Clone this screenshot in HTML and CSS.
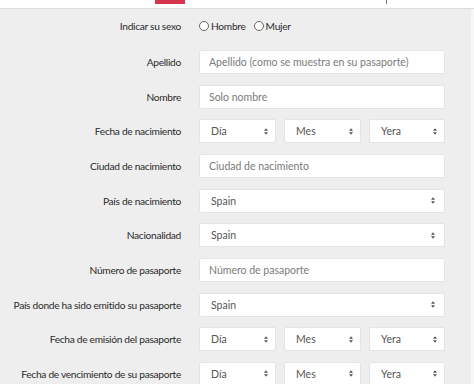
FILE: index.html
```html
<!DOCTYPE html>
<html lang="es">
  <head>
    <meta charset="UTF-8" />
    <meta name="viewport" content="width=device-width, initial-scale=1.0" />
    <title>Formulario de pasaporte</title>
    <link rel="stylesheet" href="styles.css">
  </head>
  <body>
    <div class="topbar">
      <span class="topbar-accent"></span>
      <span class="topbar-sep"></span>
    </div>
    <div class="page">
      <form class="passport-form">
        <div class="row row-first">
          <label>Indicar su sexo</label>
          <div class="radios">
            <label class="radio"><input type="radio" name="sexo" /> Hombre</label>
            <label class="radio"><input type="radio" name="sexo" /> Mujer</label>
          </div>
        </div>

        <div class="row">
          <label for="apellido">Apellido</label>
          <input class="field" id="apellido" type="text" placeholder="Apellido (como se muestra en su pasaporte)" />
        </div>

        <div class="row">
          <label for="nombre">Nombre</label>
          <input class="field" id="nombre" type="text" placeholder="Solo nombre" />
        </div>

        <div class="row">
          <label>Fecha de nacimiento</label>
          <div class="date-group">
            <div class="select-wrap"><select class="field"><option>Día</option></select><svg class="caret" viewBox="0 0 5 8"><path d="M2.5 0 5 3H0z M0 5h5L2.5 8z"/></svg></div>
            <div class="select-wrap"><select class="field"><option>Mes</option></select><svg class="caret" viewBox="0 0 5 8"><path d="M2.5 0 5 3H0z M0 5h5L2.5 8z"/></svg></div>
            <div class="select-wrap"><select class="field"><option>Yera</option></select><svg class="caret" viewBox="0 0 5 8"><path d="M2.5 0 5 3H0z M0 5h5L2.5 8z"/></svg></div>
          </div>
        </div>

        <div class="row">
          <label for="ciudad">Ciudad de nacimiento</label>
          <input class="field" id="ciudad" type="text" placeholder="Ciudad de nacimiento" />
        </div>

        <div class="row">
          <label>País de nacimiento</label>
          <div class="select-wrap wide"><select class="field"><option>Spain</option></select><svg class="caret" viewBox="0 0 5 8"><path d="M2.5 0 5 3H0z M0 5h5L2.5 8z"/></svg></div>
        </div>

        <div class="row">
          <label>Nacionalidad</label>
          <div class="select-wrap wide"><select class="field"><option>Spain</option></select><svg class="caret" viewBox="0 0 5 8"><path d="M2.5 0 5 3H0z M0 5h5L2.5 8z"/></svg></div>
        </div>

        <div class="row">
          <label for="pasaporte">Número de pasaporte</label>
          <input class="field" id="pasaporte" type="text" placeholder="Número de pasaporte" />
        </div>

        <div class="row">
          <label>País donde ha sido emitido su pasaporte</label>
          <div class="select-wrap wide"><select class="field"><option>Spain</option></select><svg class="caret" viewBox="0 0 5 8"><path d="M2.5 0 5 3H0z M0 5h5L2.5 8z"/></svg></div>
        </div>

        <div class="row">
          <label>Fecha de emisión del pasaporte</label>
          <div class="date-group">
            <div class="select-wrap"><select class="field"><option>Día</option></select><svg class="caret" viewBox="0 0 5 8"><path d="M2.5 0 5 3H0z M0 5h5L2.5 8z"/></svg></div>
            <div class="select-wrap"><select class="field"><option>Mes</option></select><svg class="caret" viewBox="0 0 5 8"><path d="M2.5 0 5 3H0z M0 5h5L2.5 8z"/></svg></div>
            <div class="select-wrap"><select class="field"><option>Yera</option></select><svg class="caret" viewBox="0 0 5 8"><path d="M2.5 0 5 3H0z M0 5h5L2.5 8z"/></svg></div>
          </div>
        </div>

        <div class="row">
          <label>Fecha de vencimiento de su pasaporte</label>
          <div class="date-group">
            <div class="select-wrap"><select class="field"><option>Día</option></select><svg class="caret" viewBox="0 0 5 8"><path d="M2.5 0 5 3H0z M0 5h5L2.5 8z"/></svg></div>
            <div class="select-wrap"><select class="field"><option>Mes</option></select><svg class="caret" viewBox="0 0 5 8"><path d="M2.5 0 5 3H0z M0 5h5L2.5 8z"/></svg></div>
            <div class="select-wrap"><select class="field"><option>Yera</option></select><svg class="caret" viewBox="0 0 5 8"><path d="M2.5 0 5 3H0z M0 5h5L2.5 8z"/></svg></div>
          </div>
        </div>
      </form>
    </div>
  </body>
</html>
```

FILE: styles.css
```css
* {
  box-sizing: border-box;
}

body {
  margin: 0;
  font-family: Lato, "Open Sans", sans-serif;
  font-size: 10.5px;
  color: #333;
  background: #fff;
  overflow: hidden;
}

.topbar {
  height: 9px;
  background: #fff;
  border-bottom: 1px solid #dcdcdc;
  position: relative;
}

.topbar-accent {
  position: absolute;
  left: 155px;
  top: 0;
  width: 30px;
  height: 4px;
  background: #d7354d;
}

.topbar-sep {
  position: absolute;
  left: 386px;
  top: 0;
  width: 1px;
  height: 4px;
  background: #777;
}

.page {
  background: #eeeeee;
  border-right: 3px solid #f7f7f7;
  min-height: 400px;
  padding-top: 5px;
}

.passport-form {
  display: flex;
  flex-direction: column;
  gap: 10.67px;
}

.row {
  display: grid;
  grid-template-columns: 181px 246px;
  column-gap: 18px;
  align-items: center;
  height: 24px;
}

.row-first {
  margin-bottom: 1.33px;
}

.row > label,
.radio {
  font-size: 10.2px;
  letter-spacing: -0.3px;
  color: #2b2b2b;
}

.row > label {
  text-align: right;
  white-space: nowrap;
}

.radios {
  display: flex;
  gap: 8px;
}

.radio {
  display: flex;
  align-items: center;
  gap: 2px;
}

.radio input {
  appearance: none;
  width: 10px;
  height: 10px;
  margin: 0;
  border: 1px solid #666;
  border-radius: 50%;
  background: #fff;
}

.field {
  width: 100%;
  height: 24px;
  border: 1px solid #e4e4e4;
  border-radius: 2px;
  background: #fff;
  font-family: inherit;
  font-size: 10.5px;
  color: #555;
  padding: 0 9px;
  outline: none;
  appearance: none;
}

.field::placeholder {
  color: #7a7a7a;
}

.date-group {
  display: grid;
  grid-template-columns: 77px 77px 76px;
  column-gap: 8px;
}

.select-wrap {
  position: relative;
}

.select-wrap .field {
  padding-left: 11px;
}

.caret {
  position: absolute;
  right: 8px;
  top: 8.5px;
  width: 4px;
  height: 7px;
  fill: #555;
}

.select-wrap.wide .caret {
  right: 10px;
}
```
